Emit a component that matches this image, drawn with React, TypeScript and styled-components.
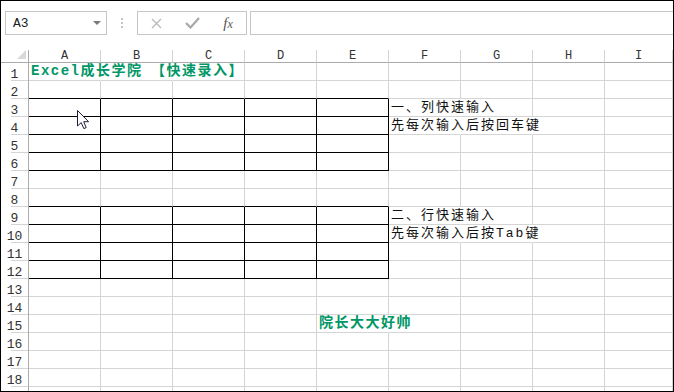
import React from 'react';
import styled, { createGlobalStyle } from 'styled-components';

const GRID = '#d4d4d4';
const HEAD = '#ababab';
const GREEN = '#009665';

type Edge = 'grid' | 'black' | 'none';

interface Entry {
    text: string,
    accent?: boolean,
    covers: number
}

const COLS = ['A', 'B', 'C', 'D', 'E', 'F', 'G', 'H', 'I'];
const ROWS = Array.from({length: 19}, (_, i) => i + 1);
const BOXES = [[3, 6], [9, 12]];

// text spills over the empty cells to its right, hiding their gridlines
const ENTRIES: Record<string, Entry> = {
    '1-A': {text: 'Excel成长学院\u3000【快速录入】', accent: true, covers: 2},
    '3-F': {text: '一、列快速输入', covers: 1},
    '4-F': {text: '先每次输入后按回车键', covers: 2},
    '9-F': {text: '二、行快速输入', covers: 1},
    '10-F': {text: '先每次输入后按Tab键', covers: 2},
    '15-E': {text: '院长大大好帅', accent: true, covers: 1},
};

const inBox = (r: number) => BOXES.some(([a, b]) => r >= a && r <= b);
const aboveBox = (r: number) => BOXES.some(([a]) => r === a - 1);

const edgeColor = (e: Edge) => e === 'black' ? '#000' : e === 'none' ? 'transparent' : GRID;

const GlobalStyle = createGlobalStyle`
  html, body {
    margin: 0;
    padding: 0;
    background: #fff;
    overflow: hidden;
  }

  * {
    box-sizing: border-box;
  }
`

const Window = styled.div`
  width: 674px;
  height: 392px;
  border: 1px solid #000;
  background: #fff;
  display: flex;
  flex-direction: column;
  overflow: hidden;
  font-family: "Liberation Mono", "Noto Sans CJK SC", monospace;
`

const FormulaBar = styled.div`
  flex: none;
  height: 49px;
  display: flex;
  align-items: flex-start;
  padding: 10px 0 0 4px;
`

const NameBox = styled.div`
  width: 102px;
  height: 24px;
  border: 1px solid #c6c6c6;
  display: flex;
  align-items: center;
  justify-content: space-between;
  padding: 0 5px 0 7px;
  font-size: 13px;
  color: #222;
`

const DropArrow = styled.span`
  width: 0;
  height: 0;
  border-left: 4px solid transparent;
  border-right: 4px solid transparent;
  border-top: 4px solid #7a7a7a;
`

const Grip = styled.div`
  margin: 7px 0 0 14px;
  display: flex;
  flex-direction: column;
  gap: 2px;

  span {
    width: 2px;
    height: 2px;
    background: #c4c4c4;
  }
`

const FxGroup = styled.div`
  margin-left: 14px;
  width: 110px;
  height: 24px;
  border: 1px solid #c6c6c6;
  display: grid;
  grid-template-columns: repeat(3, 36px);
  align-items: center;
  justify-items: center;
`

const Fx = styled.span`
  font-family: "Liberation Serif", serif;
  font-style: italic;
  font-size: 15px;
  color: #555;
  line-height: 1;

  small {
    font-size: 12px;
  }
`

const FormulaInput = styled.div`
  flex: 1;
  margin: 0 -2px 0 3px;
  height: 24px;
  border: 1px solid #c6c6c6;
`

const Sheet = styled.div`
  position: relative;
  flex: 1;
  display: grid;
  grid-template-columns: 28px repeat(8, 72px) 1fr;
  grid-template-rows: 13px;
  grid-auto-rows: 18px;
  overflow: hidden;
`

const Corner = styled.div`
  border-right: 1px solid ${HEAD};
  border-bottom: 1px solid ${HEAD};
  display: flex;
  justify-content: flex-end;
  align-items: flex-end;
  padding: 0 2px 3px 0;

  &::before {
    content: '';
    width: 0;
    height: 0;
    border-left: 9px solid transparent;
    border-bottom: 9px solid #d9d9d9;
  }
`

const ColHead = styled.div`
  border-right: 1px solid ${GRID};
  border-bottom: 1px solid ${HEAD};
  text-align: center;
  font-size: 12px;
  line-height: 12px;
  color: #333;
`

const RowHead = styled.div`
  position: relative;
  border-right: 1px solid ${HEAD};
  display: flex;
  align-items: flex-end;
  justify-content: center;
  font-size: 13px;
  line-height: 13px;
  color: #333;

  &::after {
    content: '';
    position: absolute;
    left: 10px;
    right: 0;
    bottom: 0;
    height: 1px;
    background: ${GRID};
  }
`

const Cell = styled.div<{ $right: Edge, $bottom: Edge }>`
  min-width: 0;
  border-right: 1px solid ${p => edgeColor(p.$right)};
  border-bottom: 1px solid ${p => edgeColor(p.$bottom)};
  display: flex;
  align-items: flex-end;
  padding-left: 2px;
  white-space: nowrap;
`

const CellText = styled.span<{ $accent?: boolean }>`
  font-size: ${p => p.$accent ? 14 : 13}px;
  line-height: 17px;
  letter-spacing: ${p => p.$accent ? 1.5 : 2}px;
  color: ${p => p.$accent ? GREEN : '#111'};
  font-weight: ${p => p.$accent ? 700 : 400};
`

const Pointer = styled.svg`
  position: absolute;
  left: 76px;
  top: 60px;
`

const CancelIcon = () => (
    <svg width="11" height="11" viewBox="0 0 11 11">
        <path d="M1 1 L10 10 M10 1 L1 10" stroke="#b8b8b8" strokeWidth="1.3" fill="none"/>
    </svg>
)

const EnterIcon = () => (
    <svg width="15" height="12" viewBox="0 0 15 12">
        <path d="M1 6 L5.5 10.5 L14 1" stroke="#a8a8a8" strokeWidth="2.2" fill="none"/>
    </svg>
)

const Row = ({row}: { row: number }) => {
    const hidden = new Set<number>();
    COLS.forEach((col, c) => {
        const entry = ENTRIES[`${row}-${col}`];
        if (entry) for (let k = 0; k < entry.covers; k++) hidden.add(c + k);
    });

    return (
        <>
            <RowHead>{row}</RowHead>
            {COLS.map((col, c) => {
                const boxed = c < 5;
                const entry = ENTRIES[`${row}-${col}`];
                const right: Edge = boxed && inBox(row) ? 'black' : hidden.has(c) ? 'none' : 'grid';
                const bottom: Edge = boxed && (inBox(row) || aboveBox(row)) ? 'black' : 'grid';
                return (
                    <Cell key={col} $right={right} $bottom={bottom}>
                        {entry && <CellText $accent={entry.accent}>{entry.text}</CellText>}
                    </Cell>
                );
            })}
        </>
    );
};

const App = () => (
    <Window>
        <GlobalStyle/>
        <FormulaBar>
            <NameBox>
                A3
                <DropArrow/>
            </NameBox>
            <Grip><span/><span/><span/></Grip>
            <FxGroup>
                <CancelIcon/>
                <EnterIcon/>
                <Fx>f<small>x</small></Fx>
            </FxGroup>
            <FormulaInput/>
        </FormulaBar>
        <Sheet>
            <Corner/>
            {COLS.map(col => <ColHead key={col}>{col}</ColHead>)}
            {ROWS.map(row => <Row key={row} row={row}/>)}
            <Pointer width="13" height="20" viewBox="0 0 13 20">
                <path d="M0.5 0.5 L0.5 16 L4.2 12.6 L6.8 18.6 L9.2 17.6 L6.7 11.7 L11.6 11.7 Z"
                      fill="#fff" stroke="#1c1c3c" strokeWidth="1" strokeLinejoin="miter"/>
            </Pointer>
        </Sheet>
    </Window>
);

export default App;
